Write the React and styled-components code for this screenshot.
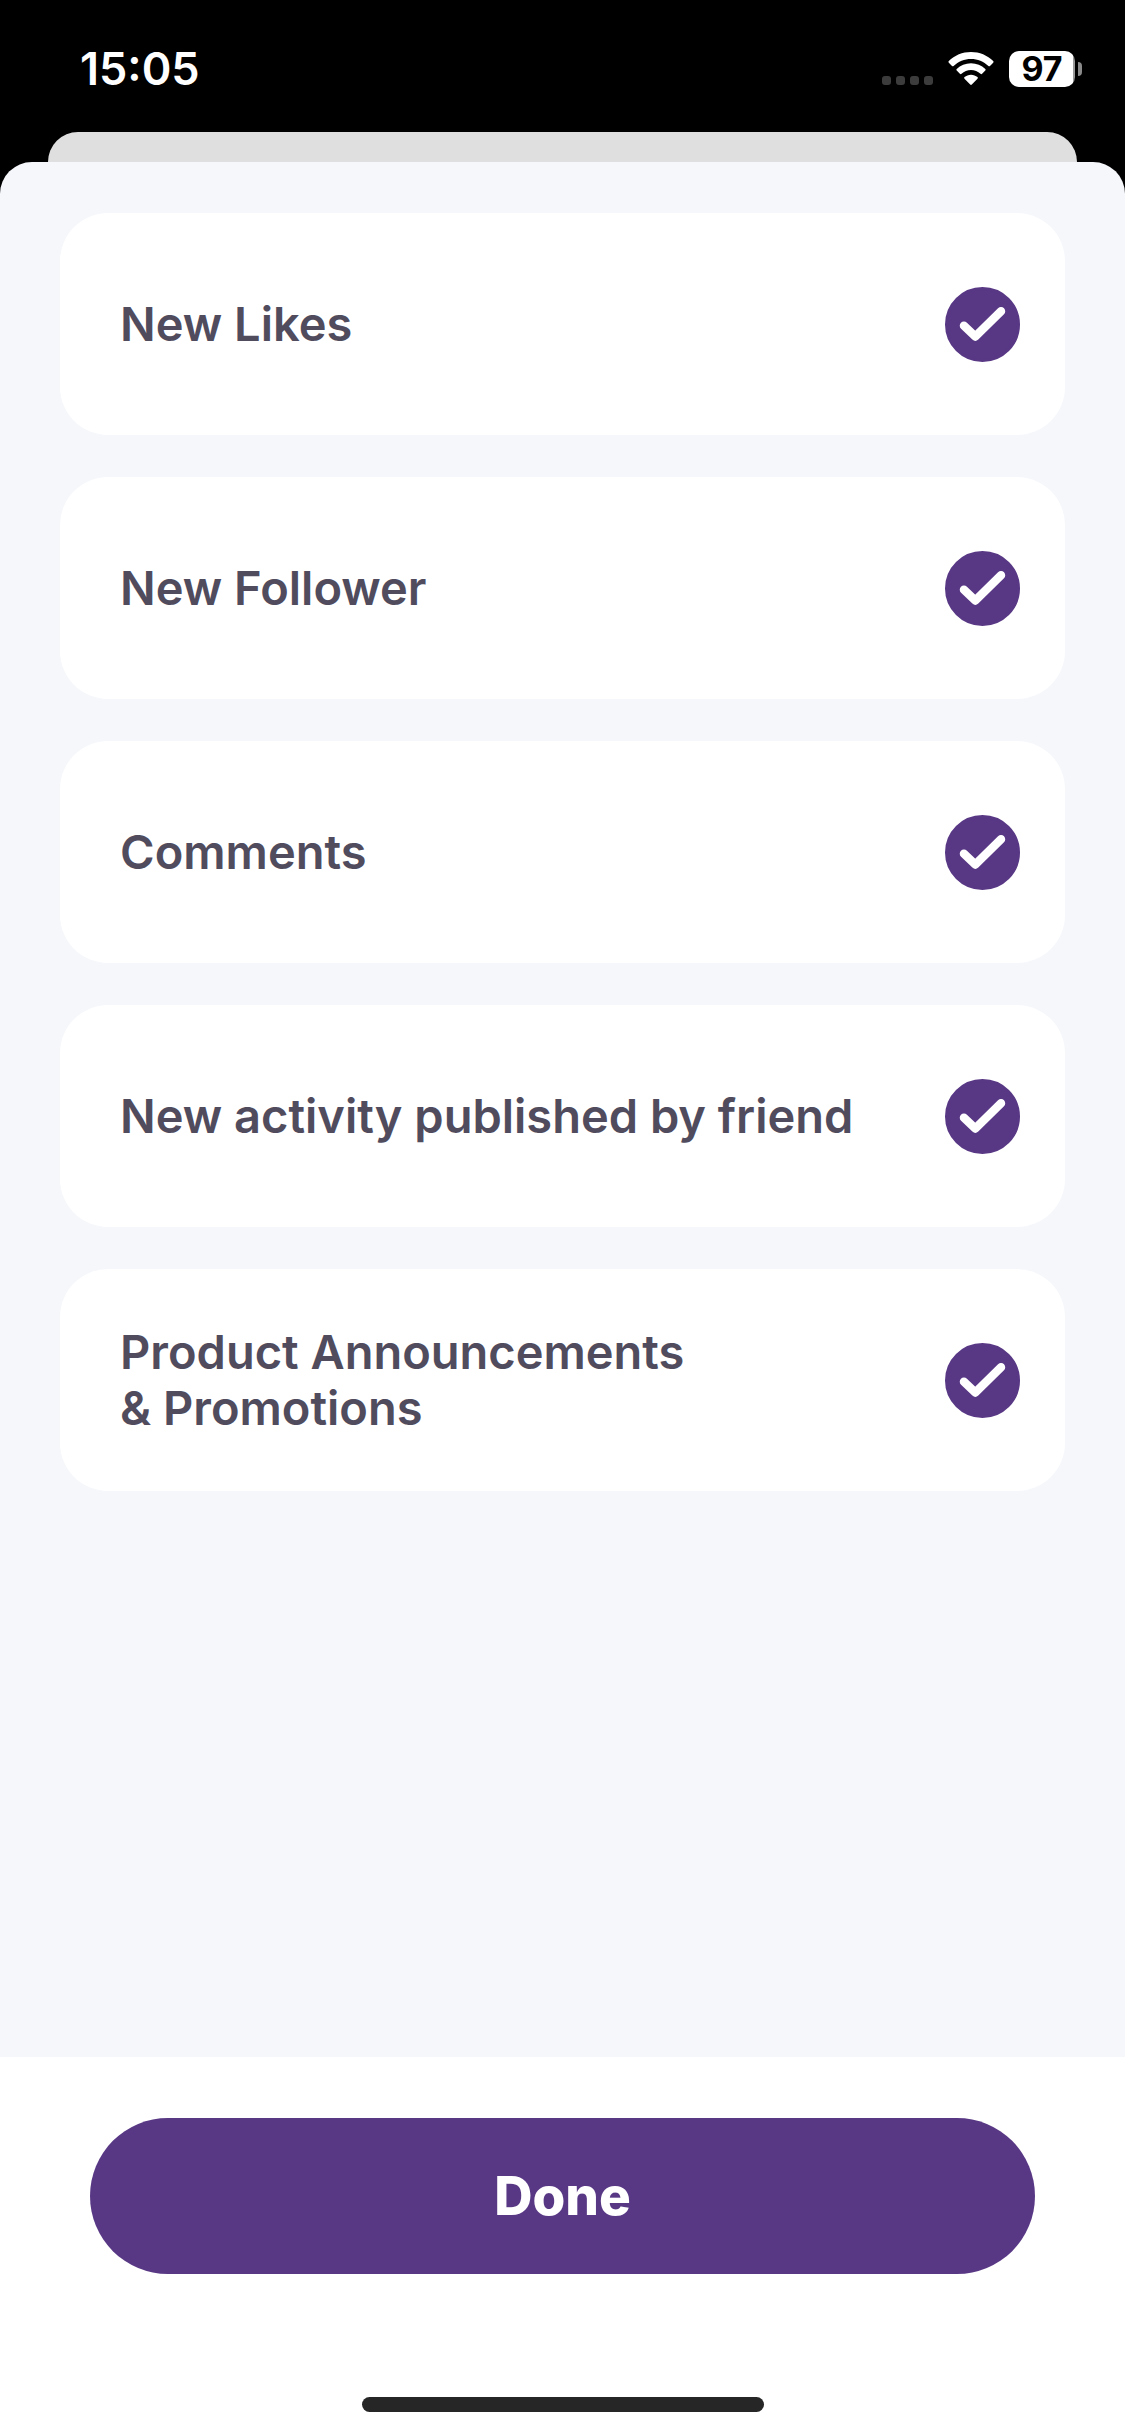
import React from "react";
import styled, { createGlobalStyle } from "styled-components";

const GlobalStyle = createGlobalStyle`
  *, *::before, *::after { box-sizing: border-box; }
  html, body, #root { height: 100%; margin: 0; }
  body {
    background: #000;
    font-family: Inter, "Liberation Sans", sans-serif;
    -webkit-font-smoothing: antialiased;
  }
`;

const Screen = styled.div`
  display: flex;
  flex-direction: column;
  min-height: 100%;
  background: #000;
`;

const StatusBar = styled.header`
  display: flex;
  justify-content: space-between;
  align-items: center;
  height: 132px;
  padding: 6px 43px 0 80px;
  color: #fff;
`;

const Clock = styled.time`
  font-size: 45px;
  line-height: 54px;
  font-weight: 600;
`;

const StatusIcons = styled.div`
  display: flex;
  align-items: center;
  gap: 15px;
`;

const Dots = styled.svg`
  display: block;
  width: 51px;
  height: 34px;
`;

const Wifi = styled.svg`
  display: block;
  width: 46px;
  height: 34px;
`;

const Battery = styled.div`
  display: flex;
  align-items: center;
  gap: 3px;
`;

const BatteryBody = styled.div`
  width: 66px;
  height: 36px;
  border-radius: 10px;
  background: linear-gradient(to right, #fff 64px, #999 64px);
  color: #000;
  font-size: 34px;
  line-height: 36px;
  font-weight: 700;
  text-align: center;
`;

const BatteryTip = styled.div`
  width: 4px;
  height: 14px;
  border-radius: 0 4px 4px 0;
  background: #8a8a8a;
`;

const BackCard = styled.div`
  height: 30px;
  margin: 0 48px;
  border-radius: 30px 30px 0 0;
  background: #dfdfdf;
`;

const Sheet = styled.main`
  display: flex;
  flex: 1;
  flex-direction: column;
  overflow: hidden;
  border-radius: 32px 32px 0 0;
  background: #f5f7fb;
`;

const Options = styled.ul`
  display: flex;
  flex: 1;
  flex-direction: column;
  gap: 42px;
  margin: 0;
  padding: 51px 60px;
  list-style: none;
`;

const OptionCard = styled.label`
  display: flex;
  align-items: center;
  justify-content: space-between;
  min-height: 222px;
  padding: 24px 45px 24px 60px;
  border-radius: 48px;
  background: #fff;
  cursor: pointer;
`;

const OptionText = styled.span`
  color: #504c5e;
  font-size: 47px;
  line-height: 56px;
  font-weight: 600;
  white-space: pre-line;
`;

const CheckWrap = styled.span`
  display: grid;
  flex: none;
  width: 75px;
  height: 75px;

  > * { grid-area: 1 / 1; }
`;

const CheckInput = styled.input`
  appearance: none;
  width: 75px;
  height: 75px;
  margin: 0;
  border: 3px solid #583885;
  border-radius: 50%;
  background: #fff;
  cursor: pointer;

  &:checked { background: #583885; }
  &:not(:checked) + svg { visibility: hidden; }
`;

const CheckMark = styled.svg`
  width: 75px;
  height: 75px;
  pointer-events: none;
`;

const Footer = styled.footer`
  display: flex;
  flex-direction: column;
  align-items: center;
  padding: 61px 90px 24px;
  background: #fff;
`;

const DoneButton = styled.button`
  width: 100%;
  height: 156px;
  margin-bottom: 123px;
  border: 0;
  border-radius: 78px;
  background: #583885;
  color: #fff;
  font-family: inherit;
  font-size: 53px;
  line-height: 64px;
  font-weight: 800;
  cursor: pointer;
`;

const HomeIndicator = styled.div`
  width: 402px;
  height: 15px;
  border-radius: 8px;
  background: #262626;
`;

const OPTIONS = [
  { id: "likes", label: "New Likes" },
  { id: "follower", label: "New Follower" },
  { id: "comments", label: "Comments" },
  { id: "activity", label: "New activity published by friend" },
  { id: "promotions", label: "Product Announcements\n& Promotions" },
];

function Option({ id, label }) {
  return (
    <li>
      <OptionCard htmlFor={id}>
        <OptionText>{label}</OptionText>
        <CheckWrap>
          <CheckInput id={id} type="checkbox" defaultChecked />
          <CheckMark viewBox="0 0 75 75" aria-hidden="true">
            <path
              d="M19 38.700L30.300 49.500L56 24.300"
              fill="none"
              stroke="#fff"
              strokeWidth="8.500"
              strokeLinecap="round"
              strokeLinejoin="round"
            />
          </CheckMark>
        </CheckWrap>
      </OptionCard>
    </li>
  );
}

export default function App() {
  return (
    <>
      <GlobalStyle />
      <Screen>
        <StatusBar>
          <Clock>15:05</Clock>
          <StatusIcons>
            <Dots viewBox="0 0 51 34" fill="#3c3c3c" aria-hidden="true">
              <rect x="0" y="24" width="9" height="9" rx="3" />
              <rect x="14" y="24" width="9" height="9" rx="3" />
              <rect x="28" y="24" width="9" height="9" rx="3" />
              <rect x="42" y="24" width="9" height="9" rx="3" />
            </Dots>
            <Wifi viewBox="0 0 46 34" fill="#fff" aria-hidden="true">
              <path d="M23 0C31.500 0 39.400 3.300 45.200 9.100Q46 9.900 45.200 10.700L42 13.900Q41.200 14.700 40.400 13.900C35.700 9.500 29.600 6.900 23 6.900S10.300 9.500 5.600 13.900Q4.800 14.700 4 13.900L0.800 10.700Q0 9.900 0.800 9.100C6.600 3.300 14.500 0 23 0Z" />
              <path d="M23 11.300C28.500 11.300 33.500 13.400 37.300 17Q38.100 17.800 37.300 18.600L34.100 21.800Q33.300 22.600 32.500 21.800C29.900 19.500 26.600 18.100 23 18.100S16.100 19.500 13.500 21.800Q12.700 22.600 11.900 21.800L8.700 18.600Q7.900 17.800 8.700 17C12.500 13.400 17.500 11.300 23 11.300Z" />
              <path d="M23 22.700C25.500 22.700 27.700 23.600 29.500 25.100Q30.300 25.900 29.500 26.700L23.800 32.500Q23 33.300 22.200 32.500L16.500 26.700Q15.700 25.900 16.500 25.100C18.300 23.600 20.500 22.700 23 22.700Z" />
            </Wifi>
            <Battery>
              <BatteryBody>97</BatteryBody>
              <BatteryTip />
            </Battery>
          </StatusIcons>
        </StatusBar>
        <BackCard />
        <Sheet>
          <Options>
            {OPTIONS.map((option) => (
              <Option key={option.id} {...option} />
            ))}
          </Options>
          <Footer>
            <DoneButton type="button">Done</DoneButton>
            <HomeIndicator />
          </Footer>
        </Sheet>
      </Screen>
    </>
  );
}
